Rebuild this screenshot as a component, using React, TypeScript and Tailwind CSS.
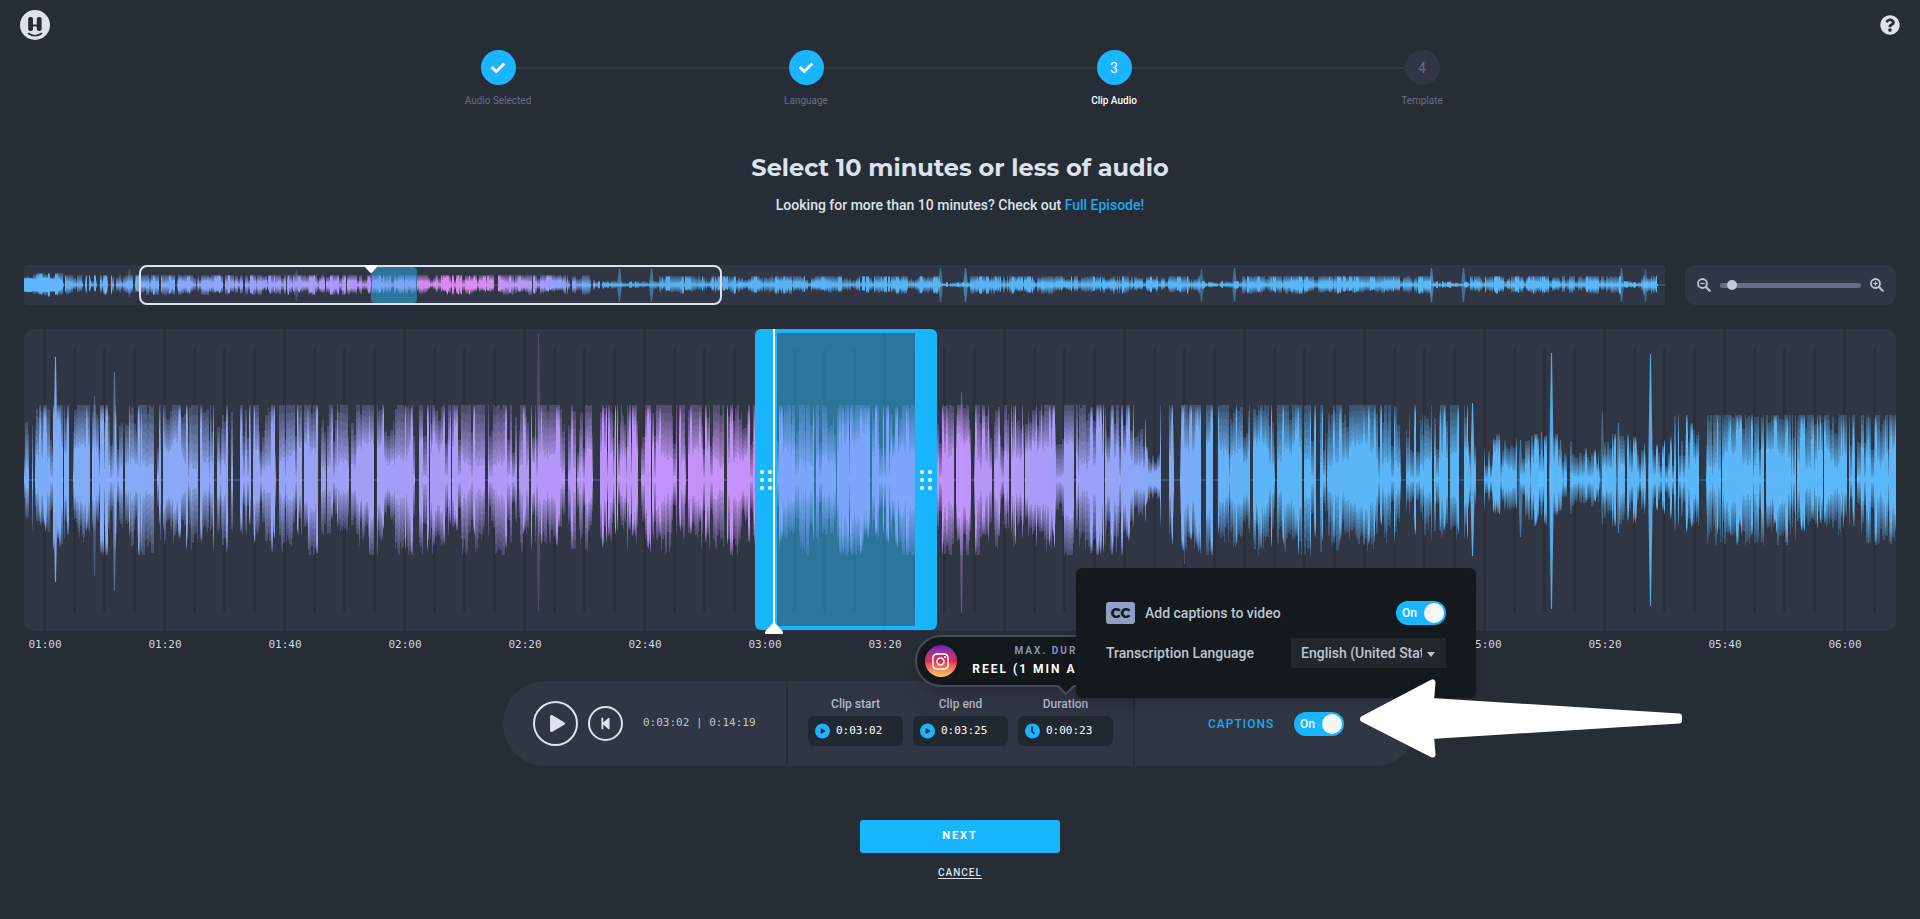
import { useState } from 'react';
import { FaCheck, FaInstagram, FaPlay, FaQuestionCircle, FaStepBackward } from 'react-icons/fa';

const steps = [
    { id: 1, label: 'Audio Selected', status: 'done' },
    { id: 2, label: 'Language', status: 'done' },
    { id: 3, label: 'Clip Audio', status: 'current' },
    { id: 4, label: 'Template', status: 'todo' }
];

const times = [
    '01:00', '01:20', '01:40', '02:00', '02:20', '02:40', '03:00', '03:20',
    '03:40', '04:00', '04:20', '04:40', '05:00', '05:20', '05:40', '06:00'
];

type Section = { to: number; cap: number; level: number };
type Spike = [x: number, up: number, down: number, strength: number];
type Stop = [offset: number, color: string];

type WaveProps = {
    id: string;
    width: number;
    height: number;
    seed: number;
    sections: Section[];
    gaps: number[][];
    spikes: Spike[];
    stops: Stop[];
    wordSize: number;
    solid?: string;
};

const makeRandom = (seed: number) => {
    let s = seed;
    return () => {
        s = (s * 1664525 + 1013904223) % 4294967296;
        return s / 4294967296;
    };
};

const LAYERS = 8;

// Every pixel column fades from a faint peak down to a solid core
const buildLayers = ({ width, height, seed, sections, gaps, spikes, wordSize }: WaveProps) => {
    const rnd = makeRandom(seed);
    const mid = height / 2;
    const layers = Array.from({ length: LAYERS }, () => '');
    let wordEnd = 0;
    let word = 0.8;
    let wordLow = 0.7;
    let coreTarget = 0.3;
    let core = 0.3;
    let run = 0;
    let column = 0.5;
    let low = 0.8;

    for (let x = 0; x < width; x++) {
        const section = sections.find((s) => x < s.to) ?? sections[sections.length - 1];
        if (x >= wordEnd) {
            wordEnd = x + wordSize * (0.5 + rnd());
            word = 0.65 + rnd() * 0.5;
            wordLow = 0.68 + rnd() * 0.45;
            coreTarget = 0.1 + rnd() * 0.4;
        }
        if (run <= 0) {
            run = 1 + Math.floor(rnd() * 2.6);
            column = rnd();
            low = 0.72 + rnd() * 0.35;
        }
        run--;
        core += (coreTarget - core) * 0.3;
        const jitter = rnd();
        const gap = gaps.some(([from, to]) => x >= from && x <= to);
        if (gap) {
            continue;
        }
        const bright = column > 0.78;
        const valley = column < 0.14;
        const peak = Math.min(1, word * section.level * (0.6 + column * 0.9)) * (valley ? 0.75 : 1);
        const solid = peak * (bright ? 0.6 + jitter * 0.3 : valley ? 0.06 + jitter * 0.1 : core + jitter * 0.1);
        const downScale = Math.min(1, wordLow * low * (0.94 + jitter * 0.12));
        for (let i = 0; i < LAYERS; i++) {
            const part = 1 - i / (LAYERS - 1);
            const reach = solid + (peak - solid) * Math.pow(part, bright ? 0.7 : 1.1);
            const up = reach * section.cap;
            const down = up * downScale;
            layers[i] += `M${x + 0.5} ${(mid - up).toFixed(1)}V${(mid + down).toFixed(1)}`;
        }
    }

    const spikePaths = spikes.map(([x, up, down, strength]) => ({
        d: `M${x - 2} ${mid}L${x} ${mid - up}L${x + 1} ${mid - up}L${x + 3} ${mid}L${x + 1} ${mid + down}L${x} ${mid + down}Z`,
        strength
    }));
    return { layers, spikePaths };
};

const layerOpacity = [0.24, 0.14, 0.15, 0.17, 0.2, 0.24, 0.3, 0.8];

const Wave = (props: WaveProps) => {
    const { id, width, height, stops, solid } = props;
    const { layers, spikePaths } = buildLayers(props);
    const paint = `url(#${id})`;

    return (
        <svg
            className="absolute inset-0 w-full h-full"
            viewBox={`0 0 ${width} ${height}`}
            preserveAspectRatio="none"
            aria-hidden="true"
        >
            <defs>
                <linearGradient id={id} gradientUnits="userSpaceOnUse" x1="0" y1="0" x2={width} y2="0">
                    {stops.map(([offset, color]) => (
                        <stop key={offset} offset={offset / width} stopColor={color} />
                    ))}
                </linearGradient>
            </defs>
            <rect x="0" y={height / 2 - 0.5} width={width} height="1" fill={paint} opacity="0.45" />
            {layers.map((d, i) => (
                <path key={i} d={d} stroke={paint} strokeWidth="1" opacity={layerOpacity[i]} fill="none" />
            ))}
            {spikePaths.map((spike, i) => (
                <path key={i} d={spike.d} fill={paint} opacity={spike.strength} />
            ))}
            {solid && <path d={solid} fill={paint} />}
        </svg>
    );
};

const mainWave: WaveProps = {
    id: 'main-wave',
    width: 1872,
    height: 302,
    seed: 7331,
    wordSize: 14,
    sections: [
        { to: 20, cap: 75, level: 0.8 },
        { to: 1096, cap: 75, level: 1.1 },
        { to: 1110, cap: 75, level: 0.85 },
        { to: 1122, cap: 75, level: 0.55 },
        { to: 1136, cap: 75, level: 0.3 },
        { to: 1444, cap: 75, level: 1.1 },
        { to: 1459, cap: 75, level: 0.5 },
        { to: 1650, cap: 46, level: 0.7 },
        { to: 1672, cap: 65, level: 0.9 },
        { to: 1872, cap: 65, level: 1.1 }
    ],
    gaps: [
        [5, 7], [9, 10], [39, 39], [45, 48], [66, 67], [99, 100], [130, 132], [137, 138], [174, 175],
        [190, 192], [204, 206], [209, 215], [227, 228], [252, 254], [278, 279], [294, 296], [302, 302],
        [325, 326], [350, 352], [391, 394], [405, 405], [427, 427], [461, 463], [493, 494], [505, 506],
        [541, 543], [552, 552], [569, 575], [592, 592], [614, 616], [627, 627], [653, 654], [662, 663],
        [700, 702], [790, 791], [812, 812], [846, 847], [930, 931], [947, 949], [968, 969], [985, 986],
        [1000, 1000], [1050, 1051], [1080, 1080], [1137, 1144], [1150, 1155], [1177, 1181], [1189, 1193],
        [1226, 1228], [1251, 1252], [1278, 1279], [1292, 1295], [1302, 1302], [1377, 1381], [1408, 1409],
        [1424, 1425], [1435, 1439], [1446, 1447], [1452, 1459], [1493, 1495], [1523, 1525], [1543, 1545],
        [1576, 1577], [1592, 1593], [1601, 1602], [1622, 1624], [1652, 1653], [1675, 1681], [1697, 1697],
        [1740, 1741], [1772, 1772], [1799, 1799], [1823, 1824], [1831, 1832]
    ],
    spikes: [
        [31, 123, 102, 0.9], [70, 84, 96, 0.3], [90, 108, 111, 0.45], [514, 146, 131, 0.22],
        [937, 88, 133, 0.35], [1160, 76, 84, 0.3], [1448, 77, 76, 0.9], [1527, 127, 129, 0.85],
        [1536, 40, 30, 0.5], [1578, 69, 44, 0.35], [1594, 57, 53, 0.5], [1626, 126, 126, 0.85],
        [1475, 40, 34, 0.5], [1496, 40, 57, 0.5], [1517, 48, 35, 0.5]
    ],
    stops: [
        [0, '#7db2ff'], [90, '#88b0ff'], [230, '#97a9fd'], [340, '#a5a3fd'], [500, '#b79cff'],
        [620, '#c497ff'], [740, '#cd94ff'], [915, '#c795ff'], [1000, '#b39eff'], [1090, '#98a8ff'],
        [1160, '#7eb1ff'], [1235, '#5cbaff'], [1872, '#5dbdff']
    ]
};

const miniWave: WaveProps = {
    id: 'mini-wave',
    width: 1641,
    height: 40,
    seed: 4242,
    wordSize: 9,
    solid: 'M0 13.500L5 13L10 14L16 13L22 12.500L28 13.500L36 14L39 17L40 20L39 23L36 26L28 26.500L20 27L12 26L6 27L0 26.500Z',
    sections: [
        { to: 39, cap: 12, level: 1 },
        { to: 566, cap: 10, level: 1.25 },
        { to: 574, cap: 10, level: 0.5 },
        { to: 635, cap: 4, level: 0.9 },
        { to: 916, cap: 9, level: 1.1 },
        { to: 946, cap: 3, level: 0.9 },
        { to: 1177, cap: 9, level: 1 },
        { to: 1218, cap: 4, level: 0.8 },
        { to: 1407, cap: 9, level: 1.25 },
        { to: 1446, cap: 4, level: 0.8 },
        { to: 1597, cap: 9, level: 1.2 },
        { to: 1614, cap: 4, level: 0.8 },
        { to: 1633, cap: 10, level: 0.8 },
        { to: 1641, cap: 2, level: 0.5 }
    ],
    gaps: [
        [39, 40], [59, 60], [63, 64], [73, 75], [84, 86], [90, 91], [109, 110], [135, 136], [151, 152],
        [172, 172], [199, 200], [219, 220], [262, 262], [301, 301], [322, 322], [347, 347], [392, 392],
        [470, 473], [508, 508], [546, 547], [567, 568], [576, 577], [1634, 1641]
    ],
    spikes: [
        [105, 16, 12, 0.25], [272, 15, 16, 0.25], [595, 17, 17, 0.5], [627, 17, 17, 0.5],
        [916, 17, 17, 0.45], [941, 17, 17, 0.55], [1177, 16, 17, 0.4], [1210, 17, 17, 0.45],
        [1407, 17, 17, 0.55], [1439, 17, 17, 0.45], [1597, 17, 17, 0.45], [1621, 16, 17, 0.35]
    ],
    stops: [
        [0, '#5bb6ff'], [80, '#6cb4ff'], [200, '#94a8ff'], [330, '#b79aff'], [400, '#d98cf5'],
        [450, '#e48ff8'], [500, '#b79cff'], [550, '#86a9ff'], [590, '#59b4f7'], [1641, '#5ebdff']
    ]
};

const Logo = () => (
    <svg className="w-[30px] h-[30px]" viewBox="0 0 30 30" aria-hidden="true">
        <circle cx="15" cy="15" r="15" fill="#dde2ed" />
        <g fill="#262c36">
            <rect x="8.200" y="7" width="4.800" height="14" rx="2" />
            <rect x="16.800" y="7" width="4.800" height="14" rx="2" />
            <rect x="11" y="14.500" width="8" height="2" />
        </g>
        <path d="M8.500 23.500Q15 28 21.500 23.500" fill="none" stroke="#262c36" strokeWidth="1.600" strokeLinecap="round" />
    </svg>
);

const Stepper = () => (
    <ol className="grid grid-cols-4 w-full max-w-[1232px] mx-auto">
        {steps.map((step, idx) => (
            <li key={step.id}>
                <div className="flex items-center">
                    <div className={`flex-1 h-0.5 ${idx === 0 ? '' : 'bg-[#313644]'}`} />
                    <div
                        className={`flex items-center justify-center w-[35px] h-[35px] rounded-full text-sm
                            ${step.status === 'todo' ? 'bg-[#313644] text-[#676d80]' : 'bg-[#1ab5ff] text-white'}`}
                    >
                        {step.status === 'done' ? <FaCheck size={14} /> : step.id}
                    </div>
                    <div className={`flex-1 h-0.5 ${idx === steps.length - 1 ? '' : 'bg-[#313644]'}`} />
                </div>
                <p
                    className={`mt-2 text-[10px] leading-4 text-center
                        ${step.status === 'current' ? 'text-white font-medium' : 'text-[#676d84]'}`}
                >
                    {step.label}
                </p>
            </li>
        ))}
    </ol>
);

const Toggle = ({ id, label }: { id: string; label?: string }) => {
    const [on, setOn] = useState(true);
    return (
        <label htmlFor={id} className="relative block w-[50px] h-6 cursor-pointer">
            <input
                id={id}
                type="checkbox"
                role="switch"
                aria-label={label}
                checked={on}
                onChange={() => setOn(!on)}
                className="absolute inset-0 w-full h-full appearance-none rounded-full bg-[#4a5164] checked:bg-[#1ab5ff]"
            />
            <span className={`relative flex items-center justify-between h-6 pl-[6px] pr-0.5 ${on ? '' : 'flex-row-reverse'}`}>
                <span className="text-xs font-medium text-white">{on ? 'On' : 'Off'}</span>
                <span className="w-5 h-5 rounded-full bg-[#f7f7f7]" />
            </span>
        </label>
    );
};

const Grip = ({ className }: { className: string }) => (
    <div className={`flex items-center justify-center bg-[#1ab5ff] ${className}`}>
        <div className="grid grid-cols-2 gap-1">
            {[0, 1, 2, 3, 4, 5].map((dot) => (
                <span key={dot} className="w-1 h-1 rounded-full bg-white" />
            ))}
        </div>
    </div>
);

const Minimap = () => (
    <div className="relative flex-1 h-10 rounded bg-[#313644]">
        <Wave {...miniWave} />
        <div
            className="absolute top-0.5 bottom-0.5 rounded bg-[#28beff]/47"
            style={{ left: `${(347 / 1641) * 100}%`, width: `${(46 / 1641) * 100}%` }}
        />
        <div
            className="absolute inset-y-0 rounded-lg border-2 border-[#dde2ed]"
            style={{ left: `${(115 / 1641) * 100}%`, width: `${(583 / 1641) * 100}%` }}
        />
        <svg
            className="absolute top-0 w-3 h-2 -translate-x-1/2"
            style={{ left: `${(347 / 1641) * 100}%` }}
            viewBox="0 0 12 8"
            aria-hidden="true"
        >
            <path d="M0 0H12V2L7 7.500Q6 8.300 5 7.500L0 2Z" fill="#fff" />
        </svg>
    </div>
);

const ZoomIcon = ({ plus }: { plus?: boolean }) => (
    <svg className="w-[14px] h-[14px]" viewBox="0 0 14 14" fill="none" stroke="currentColor" aria-hidden="true">
        <circle cx="5.500" cy="5.500" r="4.500" strokeWidth="1.800" />
        <path d="M9 9L12.700 12.700" strokeWidth="2.200" strokeLinecap="round" />
        <path d={plus ? 'M3.200 5.500H7.800M5.500 3.200V7.800' : 'M3.200 5.500H7.800'} strokeWidth="1.200" />
    </svg>
);

const ZoomPanel = () => (
    <div className="flex items-center justify-between w-[211px] h-10 px-3 rounded-[10px] bg-[#313644] text-[#bfc5d3]">
        <button type="button" aria-label="Zoom out"><ZoomIcon /></button>
        <input
            type="range"
            aria-label="Zoom"
            min={0}
            max={100}
            defaultValue={5}
            className="w-[141px] h-[5px] appearance-none rounded-sm bg-[#656e86]
                [&::-webkit-slider-thumb]:appearance-none [&::-webkit-slider-thumb]:w-[10px]
                [&::-webkit-slider-thumb]:h-[10px] [&::-webkit-slider-thumb]:rounded-full
                [&::-webkit-slider-thumb]:bg-[#c2c9d6]"
        />
        <button type="button" aria-label="Zoom in"><ZoomIcon plus /></button>
    </div>
);

const Timeline = () => {
    const lines = Array.from({ length: 62 }, (_, i) => i);
    return (
        <div className="relative h-[302px] rounded-[10px] overflow-hidden bg-[#313644]">
            <svg
                className="absolute inset-0 w-full h-full"
                viewBox="0 0 1872 302"
                preserveAspectRatio="none"
                aria-hidden="true"
            >
                {lines.map((i) => (
                    <rect
                        key={i}
                        x={19 + i * 30}
                        y={i % 4 === 0 ? 0 : 20}
                        width="3"
                        height={i % 4 === 0 ? 302 : 263}
                        fill="#2a2f3a"
                    />
                ))}
            </svg>
            <Wave {...mainWave} />
        </div>
    );
};

const Selection = () => (
    <>
        <div
            className="absolute top-0 bottom-px flex rounded-md overflow-hidden"
            style={{ left: `${(731 / 1872) * 100}%`, width: `${(182 / 1872) * 100}%` }}
        >
            <Grip className="w-[22px]" />
            <div className="flex-1 border-y-4 border-[#1ab5ff] bg-[#28beff]/47" />
            <Grip className="w-[22px]" />
        </div>
        <div
            className="absolute top-0 bottom-0 w-0.5 bg-white"
            style={{ left: `${(749 / 1872) * 100}%` }}
        />
        <svg
            className="absolute -bottom-[3px] w-[18px] h-3 -translate-x-1/2"
            style={{ left: `${(750 / 1872) * 100}%` }}
            viewBox="0 0 18 12"
            aria-hidden="true"
        >
            <path d="M8 1Q9 0 10 1L17 8.500Q18 9.500 18 11Q18 12 17 12H1Q0 12 0 11Q0 9.500 1 8.500Z" fill="#fff" />
        </svg>
    </>
);

const ClipIcon = ({ kind }: { kind: string }) => (
    <svg className="w-4 h-4" viewBox="0 0 16 16" aria-hidden="true">
        <circle cx="8" cy="8" r="8" fill="#1ab5ff" />
        {kind === 'play' ? (
            <path d="M6.500 5.500V10.500L10.800 8Z" fill="#222831" stroke="#222831" strokeLinejoin="round" />
        ) : (
            <path d="M7.500 3.800V8.200L9.500 10.600" fill="none" stroke="#222831" strokeWidth="1.800" strokeLinecap="round" strokeLinejoin="round" />
        )}
    </svg>
);

const ClipField = ({ id, label, value, kind }: { id: string; label: string; value: string; kind: string }) => (
    <div className="w-[95px]">
        <label htmlFor={id} className="block text-center text-xs font-medium text-[#b3b9c8]">{label}</label>
        <div className="flex items-center gap-[6px] h-[30px] mt-1 px-[7px] rounded-md bg-[#222831]">
            <ClipIcon kind={kind} />
            <input
                id={id}
                defaultValue={value}
                className="w-[60px] bg-transparent font-['DejaVu_Sans_Mono',monospace] text-[11px] text-white outline-none"
            />
        </div>
    </div>
);

const DurationTooltip = () => (
    <div className="absolute left-1/2 bottom-[79px] -translate-x-1/2 flex items-center w-[302px] h-[52px] pl-2 rounded-full border-2 border-[#444a5b] bg-[#13181c] shadow-xl">
        <span className="flex items-center justify-center w-8 h-8 rounded-full bg-linear-to-b from-[#6a0fc0] via-[#e0244f] to-[#fccb5c] text-white">
            <FaInstagram size={19} />
        </span>
        <div className="ml-[15px] w-[188px] text-center whitespace-nowrap">
            <p className="text-[10px] leading-4 font-bold tracking-[2px] text-[#8593b8]">MAX. DURATION</p>
            <p className="text-xs leading-5 font-bold tracking-[2px] text-white">REEL (1 MIN AND 30 SEC)</p>
        </div>
        <svg className="absolute left-1/2 top-full w-4 h-[10px] -translate-x-1/2" viewBox="0 0 16 10" aria-hidden="true">
            <path d="M0 0L8 8L16 0Z" fill="#13181c" />
            <path d="M0 1L8 9L16 1" fill="none" stroke="#444a5b" strokeWidth="2" />
        </svg>
    </div>
);

const CaptionsPopup = () => (
    <div className="absolute left-1/2 bottom-[68px] -translate-x-1/2 w-[400px] h-[130px] px-[30px] pt-[30px] rounded-md bg-[#14191d] shadow-lg text-sm font-medium text-[#bcc5d0]">
        <div className="flex items-center h-[30px]">
            <span className="flex items-center justify-center w-[29px] h-[22px] rounded-[3px] bg-[#909fc6] font-['Montserrat',sans-serif] font-extrabold text-[#14191d]">
                CC
            </span>
            <label htmlFor="add-captions" className="ml-[10px]">Add captions to video</label>
            <div className="ml-auto">
                <Toggle id="add-captions" label="Add captions to video" />
            </div>
        </div>
        <div className="flex items-center justify-between h-[30px] mt-[10px]">
            <label htmlFor="language">Transcription Language</label>
            <div className="relative">
                <select
                    id="language"
                    className="block w-[155px] h-[30px] pl-[10px] pr-6 appearance-none bg-[#22272b] font-medium text-[#bcc5d0]"
                >
                    <option>English (United States)</option>
                </select>
                <svg className="absolute right-[11px] top-[14px] w-2 h-[5px] pointer-events-none" viewBox="0 0 8 5" aria-hidden="true">
                    <path d="M0 0H8L4 5Z" fill="#bcc5d0" />
                </svg>
            </div>
        </div>
    </div>
);

const PointerArrow = () => (
    <svg className="absolute left-[225px] -top-[3px] w-[324px] h-20" viewBox="0 0 324 80" aria-hidden="true">
        <path
            d="M3 41L72.500 4.500L71 23L319 38.500V42.500L71 58L72.500 76.500Z"
            fill="#fff"
            stroke="#fff"
            strokeWidth="6"
            strokeLinejoin="round"
        />
    </svg>
);

const Controls = () => (
    <div className="flex justify-center gap-0.5 h-[85px]">
        <div className="flex items-center w-[283px] pl-[30px] rounded-l-[42px] bg-[#313644] text-[#dde2ed]">
            <button
                type="button"
                aria-label="Play"
                className="flex items-center justify-center w-[45px] h-[45px] pl-1 rounded-full border-2 border-[#dde2ed]"
            >
                <FaPlay size={17} />
            </button>
            <button
                type="button"
                aria-label="Back to clip start"
                className="flex items-center justify-center w-[35px] h-[35px] ml-[10px] rounded-full border-2 border-[#dde2ed]"
            >
                <FaStepBackward size={13} />
            </button>
            <span className="ml-5 font-['DejaVu_Sans_Mono',monospace] text-[11px] text-[#bfc5d3] whitespace-pre">
                0:03:02 | 0:14:19
            </span>
        </div>
        <div className="flex gap-[10px] px-5 pt-[15px] bg-[#313644]">
            <ClipField id="clip-start" label="Clip start" value="0:03:02" kind="play" />
            <ClipField id="clip-end" label="Clip end" value="0:03:25" kind="play" />
            <div className="relative">
                <ClipField id="duration" label="Duration" value="0:00:23" kind="clock" />
                <DurationTooltip />
            </div>
        </div>
        <div className="relative flex items-center w-[282px] pl-[73px] rounded-r-[42px] bg-[#313644]">
            <label htmlFor="captions" className="w-[86px] text-xs font-medium tracking-[1px] text-[#1da8ee]">
                CAPTIONS
            </label>
            <Toggle id="captions" label="Captions" />
            <CaptionsPopup />
            <PointerArrow />
        </div>
    </div>
);

export default function App() {
    return (
        <div className="min-h-screen bg-[#272d37] overflow-hidden font-['Roboto',sans-serif]">
            <header className="flex items-center justify-between h-[50px] px-5 text-[#dde2ed]">
                <a href="#home" aria-label="Home"><Logo /></a>
                <button type="button" aria-label="Help"><FaQuestionCircle size={20} /></button>
            </header>
            <Stepper />
            <main className="px-6">
                <h1 className="mt-[43px] text-center font-['Montserrat','Inter',sans-serif] text-2xl font-bold text-[#dde2ed]">
                    Select 10 minutes or less of audio
                </h1>
                <p className="mt-[11px] text-center text-sm font-medium text-[#dde2ed]">
                    Looking for more than 10 minutes? Check out <a href="#full" className="text-[#1da8ee]">Full Episode!</a>
                </p>
                <div className="flex gap-5 mt-[50px]">
                    <Minimap />
                    <ZoomPanel />
                </div>
                <div className="relative mt-6">
                    <Timeline />
                    <Selection />
                </div>
                <div className="flex justify-between mt-1 pr-[30px] font-['DejaVu_Sans_Mono',monospace] text-[11px] leading-5 text-[#d3d8e2]">
                    {times.map((time) => (
                        <span key={time} className="w-[42px] text-center">{time}</span>
                    ))}
                </div>
                <div className="mt-[26px]">
                    <Controls />
                </div>
                <div className="flex flex-col items-center mt-[54px]">
                    <button type="button" className="w-[200px] h-[33px] rounded-[3px] bg-[#1ab5ff] text-[11px] font-bold tracking-[2px] text-white">
                        NEXT
                    </button>
                    <button type="button" className="mt-3 text-[10px] leading-4 font-medium tracking-[1px] text-[#dde2ed] underline underline-offset-2">
                        CANCEL
                    </button>
                </div>
            </main>
        </div>
    );
}
